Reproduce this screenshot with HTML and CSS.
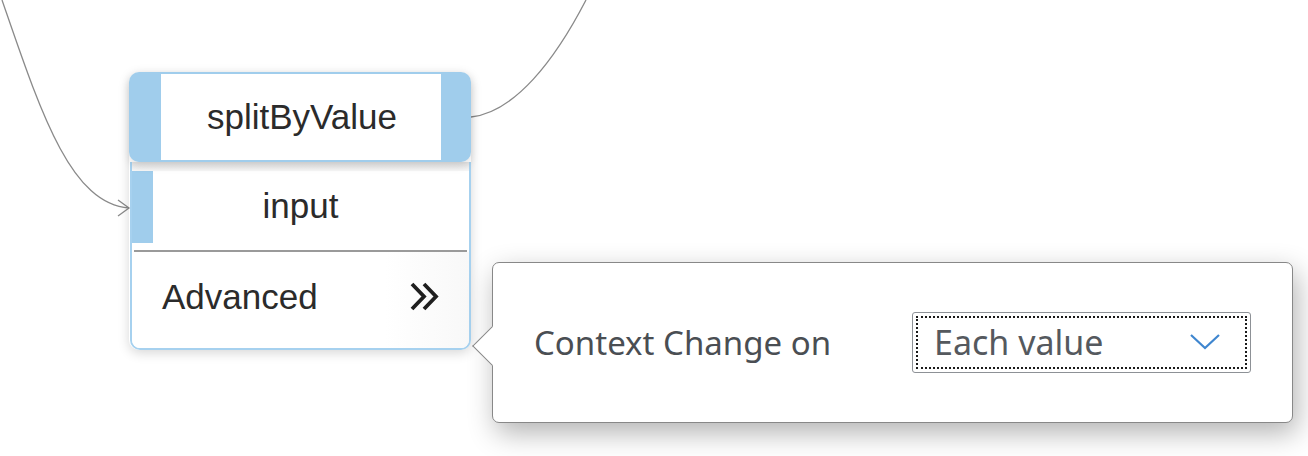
FILE: index.html
```html
<!DOCTYPE html>
<html lang="en">
<head>
<meta charset="utf-8">
<title>splitByValue</title>
<link rel="stylesheet" href="styles.css">
</head>
<body>
<div class="canvas">
  <svg class="edges" width="1308" height="456" viewBox="0 0 1308 456">
    <path d="M2 0 C40 110, 70 204, 129 208" />
    <path d="M118 200 L129 208 L118 216" />
    <path d="M471 117 C515 112, 555 60, 586 0" />
  </svg>

  <div class="node">
    <div class="node-head">
      <span class="head-bar"></span>
      <span class="head-title">splitByValue</span>
      <span class="head-bar head-bar-right"></span>
    </div>
    <div class="node-body">
      <div class="body-shade"></div>
      <div class="port-row">
        <span class="port-bar"></span>
        <span class="port-name">input</span>
        <span class="port-spacer"></span>
      </div>
      <div class="separator"></div>
      <div class="adv-row">
        <span class="adv-label">Advanced</span>
        <svg class="adv-icon" width="32" height="32" viewBox="0 0 32 32">
          <path d="M3 3 L15 15.5 L3 28" />
          <path d="M15 3 L27 15.5 L15 28" />
        </svg>
      </div>
    </div>
  </div>

  <div class="popover">
    <span class="pop-label">Context Change on</span>
    <div class="select">
      <div class="select-focus">
        <span class="select-value">Each value</span>
        <svg class="select-arrow" width="32" height="18" viewBox="0 0 32 18">
          <path d="M2 2 L16 15 L30 2" />
        </svg>
      </div>
    </div>
  </div>
</div>
</body>
</html>
```
FILE: styles.css
```css
* { box-sizing: border-box; }

html, body {
  margin: 0;
  padding: 0;
  background: #ffffff;
}

.canvas {
  position: relative;
  width: 1308px;
  height: 456px;
  overflow: hidden;
  background: #ffffff;
}

.edges {
  position: absolute;
  left: 0;
  top: 0;
}

.edges path {
  fill: none;
  stroke: #8a8a8a;
  stroke-width: 1.3;
}

/* ---------- node ---------- */
.node {
  position: absolute;
  left: 129px;
  top: 72px;
  width: 342px;
  display: flex;
  flex-direction: column;
  font-family: "Liberation Sans", Arial, sans-serif;
  color: #2b2b2b;
  border-radius: 10px;
  box-shadow: 0 3px 12px rgba(0, 0, 0, 0.16);
}

.node-head {
  position: relative;
  z-index: 1;
  height: 90px;
  display: flex;
  padding: 2px 0;
  background: #a0cdec;
  border-radius: 10px;
  box-shadow: 0 4px 8px rgba(0, 0, 0, 0.12);
}

.head-bar {
  width: 32px;
  flex: none;
}

.head-bar-right {
  width: 30px;
}

.head-title {
  flex: 1;
  background: #ffffff;
  display: flex;
  align-items: center;
  justify-content: center;
  font-size: 35px;
  padding-left: 2px;
}

.node-body {
  display: flex;
  flex-direction: column;
  background: #ffffff;
  border: 2px solid #a6d1ef;
  border-top: none;
  border-radius: 0 0 10px 10px;
  margin-left: 1px;
  overflow: hidden;
}

.body-shade {
  height: 9px;
  background: linear-gradient(#e4e4e4, #f7f7f7);
}

.port-row {
  height: 72px;
  display: grid;
  grid-template-columns: 21px 1fr 21px;
}

.port-bar {
  background: #a0cdec;
}

.port-name {
  display: flex;
  align-items: center;
  justify-content: center;
  font-size: 35px;
  padding-bottom: 2px;
}

.separator {
  height: 2px;
  margin: 7px 2px 0 2px;
  background: #9a9a9a;
}

.adv-row {
  height: 96px;
  display: flex;
  align-items: center;
  justify-content: space-between;
  padding: 0 28px 6px 30px;
  background: linear-gradient(90deg, #ffffff 75%, #f8f8f8);
}

.adv-label {
  font-size: 35px;
}

.adv-icon path {
  fill: none;
  stroke: #1f1f1f;
  stroke-width: 3.8;
}

/* ---------- popover ---------- */
.popover {
  position: absolute;
  left: 492px;
  top: 262px;
  width: 801px;
  height: 161px;
  display: flex;
  align-items: center;
  justify-content: space-between;
  padding: 0 41px;
  background: #ffffff;
  border: 1px solid #888888;
  border-radius: 7px;
  box-shadow: 4px 10px 28px rgba(0, 0, 0, 0.3);
  font-family: "Noto Sans", "Open Sans", sans-serif;
}

.popover::before {
  content: "";
  position: absolute;
  left: -15px;
  top: 69px;
  width: 27px;
  height: 27px;
  background: #ffffff;
  border-left: 1px solid #888888;
  border-bottom: 1px solid #888888;
  transform: rotate(45deg);
}

.pop-label {
  font-size: 33px;
  color: #4a4e53;
}

.select {
  width: 339px;
  height: 61px;
  border: 1px solid #8d9196;
  border-radius: 3px;
  padding: 3px;
  background: #ffffff;
}

.select-focus {
  height: 100%;
  border: 2px dotted #1a1a1a;
  display: flex;
  align-items: center;
  justify-content: space-between;
  padding: 0 24px 2px 16px;
}

.select-value {
  font-size: 34px;
  color: #55595e;
}

.select-arrow path {
  fill: none;
  stroke: #3f86cf;
  stroke-width: 2.2;
}
```
